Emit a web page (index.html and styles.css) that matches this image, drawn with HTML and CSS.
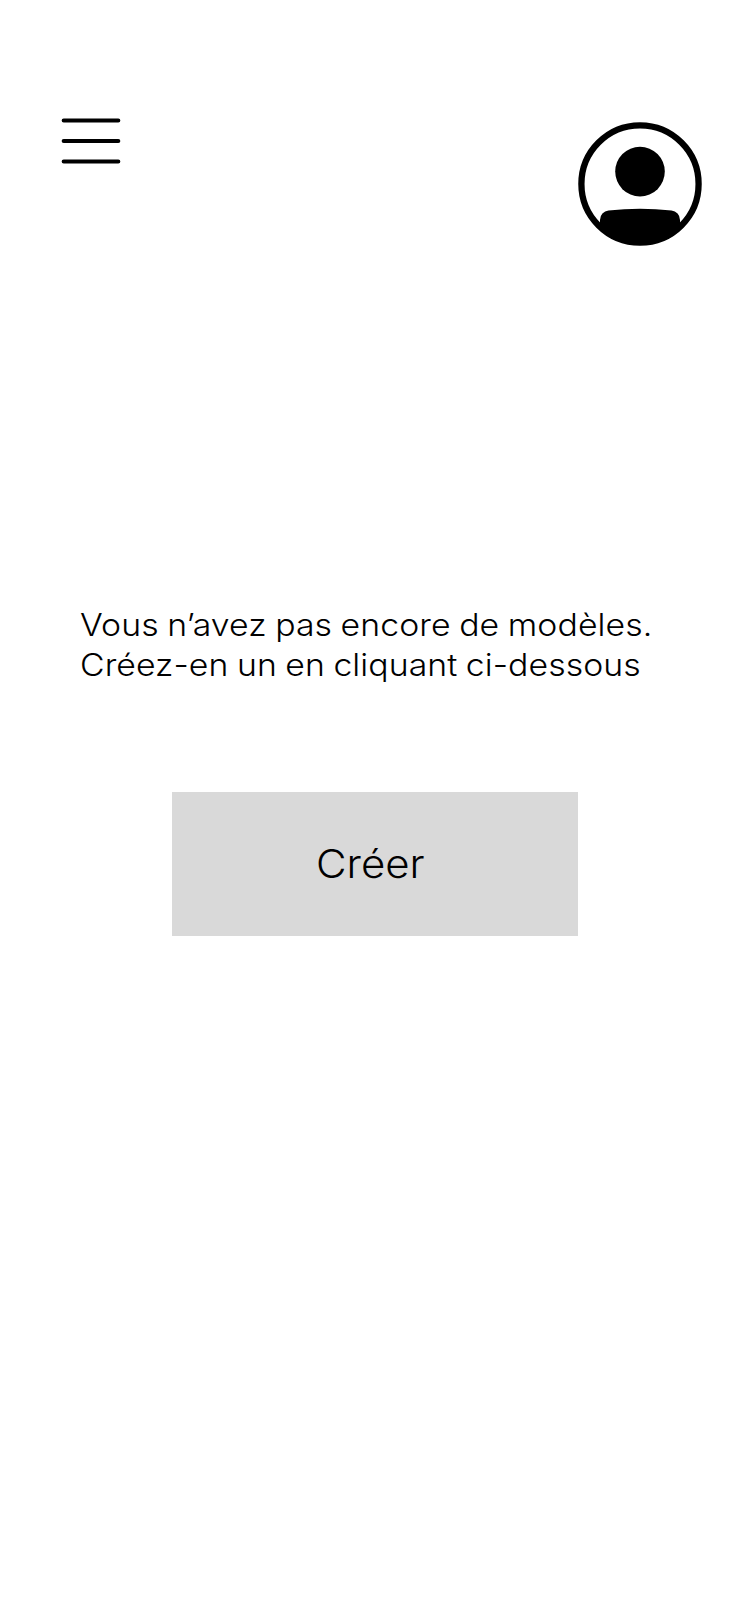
FILE: index.html
```html
<!DOCTYPE html>
<html lang="fr">
<head>
<meta charset="utf-8">
<title>Modèles</title>
<link rel="stylesheet" href="styles.css">
</head>
<body>
<header class="topbar">
  <svg class="menu" width="62" height="48" viewBox="0 0 62 48" role="img" aria-label="Menu">
    <path d="M3.7 3.5H58.3M3.7 24H58.3M3.7 44.5H58.3" fill="none" stroke="#000" stroke-width="4.1" stroke-linecap="round"/>
  </svg>
  <svg class="avatar" width="124" height="124" viewBox="578 122 124 124" role="img" aria-label="Profil">
    <circle cx="640" cy="184" r="58.6" fill="none" stroke="#000" stroke-width="6.3"/>
    <circle cx="640" cy="171.6" r="24.8"/>
    <path d="M600 230V220A9.5 9.5 0 0 1 608.5 210.5Q640 207 671.5 210.5A9.5 9.5 0 0 1 680 220V230A61.5 61.5 0 0 1 600 230Z"/>
  </svg>
</header>
<main class="content">
  <p class="message">
    <span class="line first">Vous n’avez pas encore de modèles.</span>
    <span class="line second">Créez-en un en cliquant ci-dessous</span>
  </p>
  <button class="create" type="button"><span class="label">Créer</span></button>
</main>
</body>
</html>
```
FILE: styles.css
```css
body {
  margin: 0;
  min-height: 1624px;
  background: #fff;
  color: #000;
  font-family: Inter, "Liberation Sans", sans-serif;
  font-weight: 330;
}
.topbar {
  display: flex;
  justify-content: space-between;
  align-items: flex-start;
  padding: 117px 48px 0 60px;
}
.menu, .avatar { display: block; }
.avatar { margin-top: 5px; }
.content {
  display: flex;
  flex-direction: column;
  align-items: flex-start;
}
.message {
  margin: 359px 0 0 80px;
  font-size: 31px;
  line-height: 40px;
}
.line {
  display: block;
  white-space: nowrap;
  transform: scaleX(1.09);
  transform-origin: left;
}
.first { letter-spacing: 0.08px; word-spacing: -1px; }
.second { letter-spacing: 0.06px; word-spacing: -1px; }
.create {
  display: flex;
  align-items: center;
  width: 406px;
  height: 144px;
  margin: 107px 0 0 172px;
  padding: 0 0 0 144px;
  border: 0;
  background: #d9d9d9;
  color: #000;
  font: inherit;
  font-size: 39px;
  line-height: 48px;
}
.label {
  letter-spacing: 0;
  transform: scaleX(1.075);
  transform-origin: left;
}
```
